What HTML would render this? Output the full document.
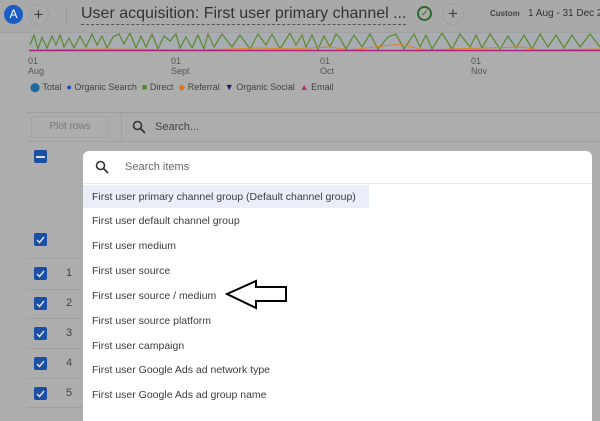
<!DOCTYPE html>
<html><head><meta charset="utf-8"><style>
*{margin:0;padding:0;box-sizing:border-box}
body{width:600px;height:414px;overflow:hidden;background:#adadad;font-family:"Liberation Sans",Arial,sans-serif;position:relative;color:#333}
.a{position:absolute}
.cb{position:absolute;left:34px;width:13px;height:13px;background:#1a4fa3;border-radius:2px}
.cb svg{position:absolute;left:0;top:0}
.num{position:absolute;left:66px;font-size:11px;color:#444}
.item{position:absolute;left:92px;font-size:10.5px;color:#3c3c3c;white-space:nowrap}
</style></head><body>
<div class="a" style="left:0;top:0;width:600px;height:33px;background:#a9a9a9;border-bottom:1px solid #a0a0a0"></div>
<div class="a" style="left:4px;top:5px;width:19px;height:19px;border-radius:50%;background:#1b5cc4;color:#fff;font-size:12px;text-align:center;line-height:19px">A</div>
<div class="a" style="left:28px;top:4px;width:21px;height:21px;border-radius:50%;border:1px dashed #999;color:#444;font-size:17px;text-align:center;line-height:19px">+</div>
<div class="a" style="left:66px;top:5px;width:1px;height:22px;background:#9a9a9a"></div>
<div class="a" style="left:81px;top:4px;font-size:16px;color:#333;white-space:nowrap;border-bottom:1px dashed #555;line-height:20px">User acquisition: First user primary channel ...</div>
<div class="a" style="left:417px;top:6px;width:15px;height:15px;border-radius:50%;border:2px solid #2a6a2a"></div>
<div class="a" style="left:421px;top:8px;font-size:9px;color:#2a6a2a">✓</div>
<div class="a" style="left:442px;top:3px;width:22px;height:22px;border-radius:50%;border:1px dashed #999;color:#444;font-size:17px;text-align:center;line-height:20px">+</div>
<div class="a" style="left:490px;top:9px;font-size:8px;color:#444;font-weight:bold">Custom</div>
<div class="a" style="left:528px;top:8px;font-size:10px;color:#333;white-space:nowrap">1 Aug - 31 Dec 2</div>
<div class="a" style="left:29px;top:34px;width:571px;height:17px;background:#a9adb3"></div>
<svg class="a" style="left:0;top:33px" width="600" height="20">
<polyline fill="none" stroke="#5a8a2a" stroke-width="1.2" points="30,12 34,2 38,16 42,4 47,15 52,3 56,12 60,2 64,14 69,5 74,15 80,3 86,14 92,1 97,12 102,3 107,15 113,4 119,1 124,11 130,0 136,15 141,3 146,14 152,1 158,16 164,3 170,8 176,1 180,15 186,4 192,15 198,2 204,16 208,1 214,14 222,1 232,14 240,2 250,16 258,1 266,12 272,1 280,16 290,0 296,12 302,2 306,14 312,2 318,16 324,3 330,14 336,1 340,5 346,16 354,2 362,14 370,1 378,16 388,4 396,1 404,16 414,1 420,14 426,2 432,16 442,0 452,16 460,1 470,14 476,2 482,15 490,1 500,16 508,3 516,15 524,2 532,16 540,1 548,14 556,2 564,15 572,2 580,14 590,1 600,14"/>
<polyline fill="none" stroke="#d9822b" stroke-width="1" points="30,17 100,16 200,17 260,15 290,16 330,14 350,17 400,11 420,16 435,17 450,16 520,14 540,17 600,16"/>
<line x1="29" y1="17.5" x2="600" y2="17.5" stroke="#b3207a" stroke-width="1.5"/>
</svg>
<div class="a" style="left:28px;top:56px;font-size:9px;color:#555;line-height:10px">01<br>Aug</div>
<div class="a" style="left:171px;top:56px;font-size:9px;color:#555;line-height:10px">01<br>Sept</div>
<div class="a" style="left:320px;top:56px;font-size:9px;color:#555;line-height:10px">01<br>Oct</div>
<div class="a" style="left:471px;top:56px;font-size:9px;color:#555;line-height:10px">01<br>Nov</div>
<div class="a" style="left:30px;top:82px;font-size:9px;color:#444;white-space:nowrap">
<span style="color:#1a6a9a">⬤</span> Total&nbsp; <span style="color:#1b4bb0">●</span> Organic Search&nbsp; <span style="color:#4d8a2a">■</span> Direct&nbsp; <span style="color:#d07a20">◆</span> Referral&nbsp; <span style="color:#1a1a6a">▼</span> Organic Social&nbsp; <span style="color:#c0307a">▲</span> Email</div>
<div class="a" style="left:27px;top:112px;width:573px;height:1px;background:#9e9e9e"></div>
<div class="a" style="left:27px;top:141px;width:573px;height:1px;background:#9e9e9e"></div>
<div class="a" style="left:121px;top:112px;width:1px;height:29px;background:#9e9e9e"></div>
<div class="a" style="left:31px;top:116px;width:78px;height:22px;border:1px solid #a2a2a2;border-radius:3px;font-size:10px;color:#777;text-align:center;line-height:20px">Plot rows</div>
<svg class="a" style="left:132px;top:120px" width="14" height="14"><circle cx="5.5" cy="5.5" r="4" fill="none" stroke="#333" stroke-width="1.6"/><line x1="8.5" y1="8.5" x2="13" y2="13" stroke="#333" stroke-width="1.8"/></svg>
<div class="a" style="left:155px;top:121px;font-size:11px;color:#444">Search...</div>
<div class="cb" style="top:150px"><div style="position:absolute;left:2px;top:6px;width:9px;height:1.5px;background:#ddd"></div></div>
<div class="cb" style="top:233px"><svg width="13" height="13"><polyline points="3,7 5.5,9.5 10,4" fill="none" stroke="#ddd" stroke-width="1.5"/></svg></div>
<div class="a" style="left:27px;top:258px;width:60px;height:1px;background:#a0a0a0"></div>
<div class="cb" style="top:267px"><svg width="13" height="13"><polyline points="3,7 5.5,9.5 10,4" fill="none" stroke="#ddd" stroke-width="1.5"/></svg></div><div class="num" style="top:267px">1</div>
<div class="a" style="left:27px;top:289px;width:60px;height:1px;background:#a0a0a0"></div>
<div class="cb" style="top:297px"><svg width="13" height="13"><polyline points="3,7 5.5,9.5 10,4" fill="none" stroke="#ddd" stroke-width="1.5"/></svg></div><div class="num" style="top:297px">2</div>
<div class="a" style="left:27px;top:318px;width:60px;height:1px;background:#a0a0a0"></div>
<div class="cb" style="top:327px"><svg width="13" height="13"><polyline points="3,7 5.5,9.5 10,4" fill="none" stroke="#ddd" stroke-width="1.5"/></svg></div><div class="num" style="top:327px">3</div>
<div class="a" style="left:27px;top:348px;width:60px;height:1px;background:#a0a0a0"></div>
<div class="cb" style="top:357px"><svg width="13" height="13"><polyline points="3,7 5.5,9.5 10,4" fill="none" stroke="#ddd" stroke-width="1.5"/></svg></div><div class="num" style="top:357px">4</div>
<div class="a" style="left:27px;top:378px;width:60px;height:1px;background:#a0a0a0"></div>
<div class="cb" style="top:387px"><svg width="13" height="13"><polyline points="3,7 5.5,9.5 10,4" fill="none" stroke="#ddd" stroke-width="1.5"/></svg></div><div class="num" style="top:387px">5</div>
<div class="a" style="left:27px;top:407px;width:60px;height:1px;background:#a0a0a0"></div>
<div class="a" style="left:83px;top:151px;width:509px;height:270px;background:#fff;border-radius:6px 6px 0 0"></div>
<svg class="a" style="left:95px;top:160px" width="14" height="14"><circle cx="5.5" cy="5.5" r="4" fill="none" stroke="#333" stroke-width="1.6"/><line x1="8.5" y1="8.5" x2="13" y2="13" stroke="#333" stroke-width="1.8"/></svg>
<div class="a" style="left:125px;top:161px;font-size:11px;color:#666">Search items</div>
<div class="a" style="left:83px;top:183px;width:509px;height:1px;background:#ebebeb"></div>
<div class="a" style="left:83px;top:185px;width:286px;height:23px;background:#e9eef8"></div>
<div class="item" style="top:191px">First user primary channel group (Default channel group)</div>
<div class="item" style="top:215px">First user default channel group</div>
<div class="item" style="top:240px">First user medium</div>
<div class="item" style="top:265px">First user source</div>
<div class="item" style="top:290px">First user source / medium</div>
<div class="item" style="top:315px">First user source platform</div>
<div class="item" style="top:340px">First user campaign</div>
<div class="item" style="top:364px">First user Google Ads ad network type</div>
<div class="item" style="top:389px">First user Google Ads ad group name</div>
<svg class="a" style="left:0;top:0" width="600" height="414"><polygon points="227,294 256,281 256,287 286,287 286,301 256,301 256,308" fill="#fff" stroke="#000" stroke-width="2"/></svg>
</body></html>
